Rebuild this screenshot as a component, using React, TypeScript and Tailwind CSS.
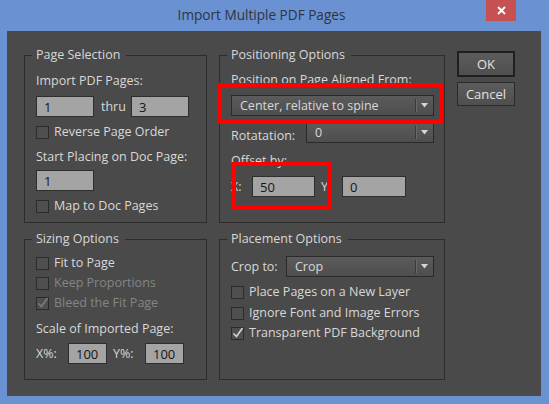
import type { ReactNode } from "react";

function Group({ title, className, children }: { title: string; className: string; children: ReactNode }) {
  return (
    <fieldset className={`border border-[#2c2c2c] ${className}`}>
      <legend className="ml-[7px] pl-[4px] pr-[6px] text-[12.5px] leading-4">{title}</legend>
      {children}
    </fieldset>
  );
}

function Field({ value, className }: { value: string; className: string }) {
  return (
    <div className={`flex h-[21px] items-center border border-[#2e2e2e] bg-[#a4a4a4] pl-[7px] text-[13px] text-[#151515] ${className}`}>
      {value}
    </div>
  );
}

function Check({ label, checked = false, disabled = false, className = "" }: { label: string; checked?: boolean; disabled?: boolean; className?: string }) {
  return (
    <div className={`flex h-4 items-center ${className}`}>
      <span className="relative h-[13px] w-[13px] border border-[#2b2b2b] bg-[#4f4f4f]">
        {checked ? (
          <svg className="absolute -left-px -top-[2px]" width="14" height="14" viewBox="0 0 14 14">
            <path d="M2.5 7.5 L5.5 10.5 L11.5 2" fill="none" stroke={disabled ? "#7c7c7c" : "#d4d4d4"} strokeWidth="1.6" />
          </svg>
        ) : null}
      </span>
      <span className={`ml-[5px] ${disabled ? "text-[#858585]" : ""}`}>{label}</span>
    </div>
  );
}

function Select({ value, className }: { value: string; className: string }) {
  return (
    <div className={`flex h-[21px] items-center border border-[#2a2a2a] bg-gradient-to-b from-[#5b5b5b] to-[#4e4e4e] ${className}`}>
      <span className="flex-1 pl-[8px]">{value}</span>
      <span className="h-[13px] w-px bg-[#3a3a3a] shadow-[1px_0_0_#686868]" />
      <span className="flex w-[17px] justify-center">
        <svg width="7" height="5" viewBox="0 0 7 5">
          <path d="M0 0H7L3.5 4.5Z" fill="#d6d6d6" />
        </svg>
      </span>
    </div>
  );
}

export default function App() {
  return (
    <div className="flex h-[404px] w-[549px] flex-col bg-[#6a91d1] font-['Open_Sans','Noto_Sans',sans-serif] text-[12.5px] leading-4 text-[#d8d8d8]">
      <div className="relative flex h-[31px] shrink-0 items-center justify-center pr-[26px]">
        <span className="pb-[1px] text-[13.6px] leading-5 text-[#2f3540]">Import Multiple PDF Pages</span>
        <button className="absolute right-[33px] top-0 flex h-[21px] w-[30px] items-center justify-center bg-[#c75050]">
          <svg width="9" height="9" viewBox="0 0 9 9">
            <path d="M1 1L8 8M8 1L1 8" stroke="#fff" strokeWidth="1.8" />
          </svg>
        </button>
      </div>

      <div className="mb-[8px] ml-[7px] mr-[8px] flex flex-1 bg-[#4a4a4a] pl-[17px] pt-[16px]">
        {/* left column */}
        <div className="flex w-[183px] flex-col gap-[8px]">
          <Group title="Page Selection" className="h-[176px]">
            <div className="px-[11px] pt-[10px]">
              <div>Import PDF Pages:</div>
              <div className="mt-[7px] flex items-center">
                <Field value="1" className="w-[58px]" />
                <span className="w-[37px] pl-[7px]">thru</span>
                <Field value="3" className="w-[58px]" />
              </div>
              <Check label="Reverse Page Order" className="mt-[7px]" />
              <div className="mt-[9px]">Start Placing on Doc Page:</div>
              <Field value="1" className="mt-[5px] w-[58px]" />
              <Check label="Map to Doc Pages" className="mt-[7px]" />
            </div>
          </Group>

          <Group title="Sizing Options" className="h-[149px]">
            <div className="px-[11px] pt-[8px]">
              <Check label="Fit to Page" />
              <Check label="Keep Proportions" disabled className="mt-[4px]" />
              <Check label="Bleed the Fit Page" checked disabled className="mt-[4px]" />
              <div className="mt-[10px]">Scale of Imported Page:</div>
              <div className="mt-[6px] flex items-center">
                <span className="w-[32px]">X%:</span>
                <Field value="100" className="w-[39px]" />
                <span className="w-[38px] pl-[6px]">Y%:</span>
                <Field value="100" className="w-[39px]" />
              </div>
            </div>
          </Group>
        </div>

        {/* right column */}
        <div className="ml-[12px] flex w-[226px] flex-col gap-[8px]">
          <div className="relative">
            <Group title="Positioning Options" className="h-[176px]">
              <div className="pl-[11px] pr-[10px] pt-[9px]">
                <div>Position on Page Aligned From:</div>
                <Select value="Center, relative to spine" className="mt-[7px]" />
                <div className="mt-[6px] flex items-start">
                  <span className="w-[75px] pt-[6px]">Rotatation:</span>
                  <Select value="0" className="flex-1" />
                </div>
                <div className="mt-[9px]">Offset by:</div>
                <div className="mt-[7px] flex items-center">
                  <span className="w-[21px]">X:</span>
                  <Field value="50" className="w-[63px]" />
                  <span className="w-[27px] pl-[6px]">Y:</span>
                  <Field value="0" className="w-[64px]" />
                </div>
              </div>
            </Group>
            {/* red annotation boxes */}
            <div className="absolute left-[-1px] top-[36px] h-[41px] w-[225px] border-4 border-[#ff0000]" />
            <div className="absolute left-[13px] top-[115px] h-[48px] w-[99px] border-4 border-[#ff0000]" />
          </div>

          <Group title="Placement Options" className="h-[149px]">
            <div className="pl-[11px] pr-[10px] pt-[9px]">
              <div className="flex items-center">
                <span className="w-[55px]">Crop to:</span>
                <Select value="Crop" className="flex-1" />
              </div>
              <Check label="Place Pages on a New Layer" className="mt-[7px]" />
              <Check label="Ignore Font and Image Errors" className="mt-[5px]" />
              <Check label="Transparent PDF Background" checked className="mt-[4px]" />
            </div>
          </Group>
        </div>

        {/* buttons */}
        <div className="ml-[12px] flex w-[58px] flex-col pt-[4px]">
          <button className="h-[26px] border-2 border-[#1f1f1f] bg-gradient-to-b from-[#5c5c5c] to-[#4f4f4f] text-[13px] text-[#e2e2e2]">
            OK
          </button>
          <button className="mt-[5px] h-[24px] border border-[#2a2a2a] bg-gradient-to-b from-[#5c5c5c] to-[#4f4f4f] text-[13px] text-[#e2e2e2]">
            Cancel
          </button>
        </div>
      </div>
    </div>
  );
}
